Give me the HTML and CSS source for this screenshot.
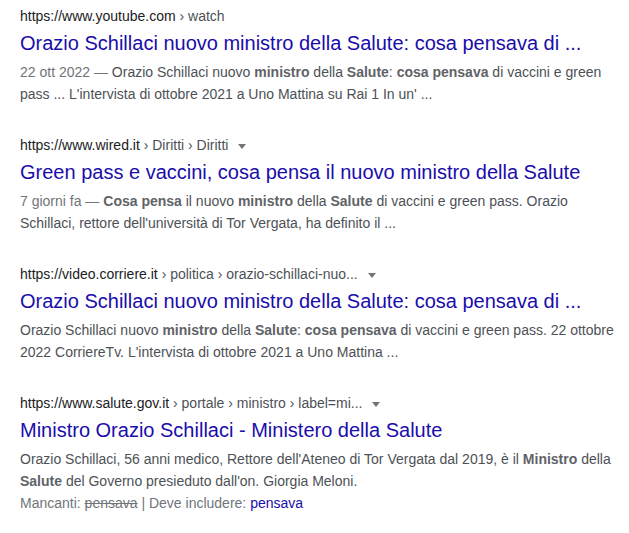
FILE: index.html
```html
<!DOCTYPE html>
<html lang="it">
<head>
    <meta charset="UTF-8">
    <title>Risultati</title>
    <link rel="stylesheet" href="styles.css">
</head>
<body>
    <div class="results">
        <div class="result">
            <div class="cite">https://www.youtube.com <span class="crumbs">› watch</span></div>
            <a class="title" href="#">Orazio Schillaci nuovo ministro della Salute: cosa pensava di ...</a>
            <div class="snippet"><span class="date">22 ott 2022 — </span>Orazio Schillaci nuovo <b>ministro</b> della <b>Salute</b>: <b>cosa pensava</b> di vaccini e green pass ... L'intervista di ottobre 2021 a Uno Mattina su Rai 1 In un' ...</div>
        </div>
        <div class="result">
            <div class="cite">https://www.wired.it <span class="crumbs">› Diritti › Diritti</span> <span class="caret"></span></div>
            <a class="title" href="#">Green pass e vaccini, cosa pensa il nuovo ministro della Salute</a>
            <div class="snippet"><span class="date">7 giorni fa — </span><b>Cosa pensa</b> il nuovo <b>ministro</b> della <b>Salute</b> di vaccini e green pass. Orazio Schillaci, rettore dell'università di Tor Vergata, ha definito il ...</div>
        </div>
        <div class="result">
            <div class="cite">https://video.corriere.it <span class="crumbs">› politica › orazio-schillaci-nuo...</span> <span class="caret"></span></div>
            <a class="title" href="#">Orazio Schillaci nuovo ministro della Salute: cosa pensava di ...</a>
            <div class="snippet">Orazio Schillaci nuovo <b>ministro</b> della <b>Salute</b>: <b>cosa pensava</b> di vaccini e green pass. 22 ottobre 2022 CorriereTv. L'intervista di ottobre 2021 a Uno Mattina ...</div>
        </div>
        <div class="result">
            <div class="cite">https://www.salute.gov.it <span class="crumbs">› portale › ministro › label=mi...</span> <span class="caret"></span></div>
            <a class="title" href="#">Ministro Orazio Schillaci - Ministero della Salute</a>
            <div class="snippet">Orazio Schillaci, 56 anni medico, Rettore dell'Ateneo di Tor Vergata dal 2019, è il <b>Ministro</b> della <b>Salute</b> del Governo presieduto dall'on. Giorgia Meloni.</div>
            <div class="missing">Mancanti: <s>pensava</s> | Deve includere: <a href="#">pensava</a></div>
        </div>
    </div>
</body>
</html>
```

FILE: styles.css
```css
/* Search results */
body {
    font-family: 'Liberation Sans', Arial, sans-serif;
    margin: 0;
    background-color: #fff;
    color: #4d5156;
}

.results {
    padding: 6px 0 0 20px;
    width: 600px;
}

.result {
    margin-bottom: 30px;
}

.cite {
    font-size: 14px;
    line-height: 20px;
    color: #202124;
}

.crumbs {
    color: #4d5156;
}

.caret {
    display: inline-block;
    width: 0;
    height: 0;
    margin-left: 6px;
    vertical-align: middle;
    border-left: 4px solid transparent;
    border-right: 4px solid transparent;
    border-top: 5px solid #70757a;
}

.title {
    display: block;
    font-size: 20px;
    line-height: 26px;
    margin: 4px 0 5px;
    color: #1a0dab;
    text-decoration: none;
}

.snippet {
    font-size: 14px;
    line-height: 22px;
}

.snippet b {
    color: #5f6368;
}

.date {
    color: #70757a;
}

.missing {
    font-size: 14px;
    line-height: 22px;
    color: #70757a;
}

.missing a {
    color: #1a0dab;
    text-decoration: none;
}
```
